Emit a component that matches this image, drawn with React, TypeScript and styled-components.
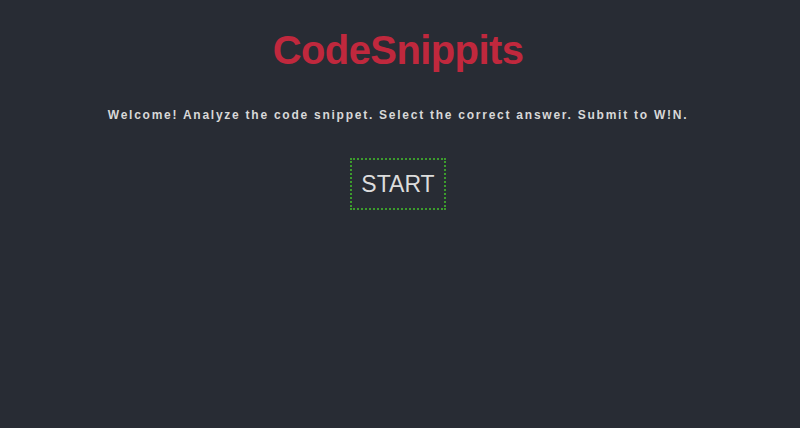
import styled, { createGlobalStyle } from 'styled-components'

const GlobalStyle = createGlobalStyle`
  html, body {
    margin: 0;
    padding: 0;
    background: #282c34;
  }
  body {
    font-family: 'Liberation Sans', Arial, sans-serif;
  }
`

const Page = styled.main`
  min-height: 428px;
  background: #282c34;
  display: flex;
  flex-direction: column;
  align-items: center;
  padding: 27px 4px 0 0;
  box-sizing: border-box;
`

const Title = styled.h1`
  margin: 0;
  color: #c0283d;
  font-size: 40px;
  font-weight: 700;
  line-height: 46px;
  letter-spacing: -0.6px;
`

const Intro = styled.p`
  margin: 35px 0 0;
  color: #d8d8d8;
  font-size: 12px;
  font-weight: 700;
  letter-spacing: 1.75px;
  line-height: 14px;
`

const StartButton = styled.button`
  margin-top: 36px;
  background: transparent;
  border: 2px dotted #3c9c2c;
  color: #dcdcdc;
  font-family: inherit;
  font-size: 23px;
  padding: 11px 9px;
  line-height: 26px;
  cursor: pointer;
`

export default function App() {
  return (
    <>
      <GlobalStyle />
      <Page>
        <Title>CodeSnippits</Title>
        <Intro>Welcome! Analyze the code snippet. Select the correct answer. Submit to W!N.</Intro>
        <StartButton type="button">START</StartButton>
      </Page>
    </>
  )
}
